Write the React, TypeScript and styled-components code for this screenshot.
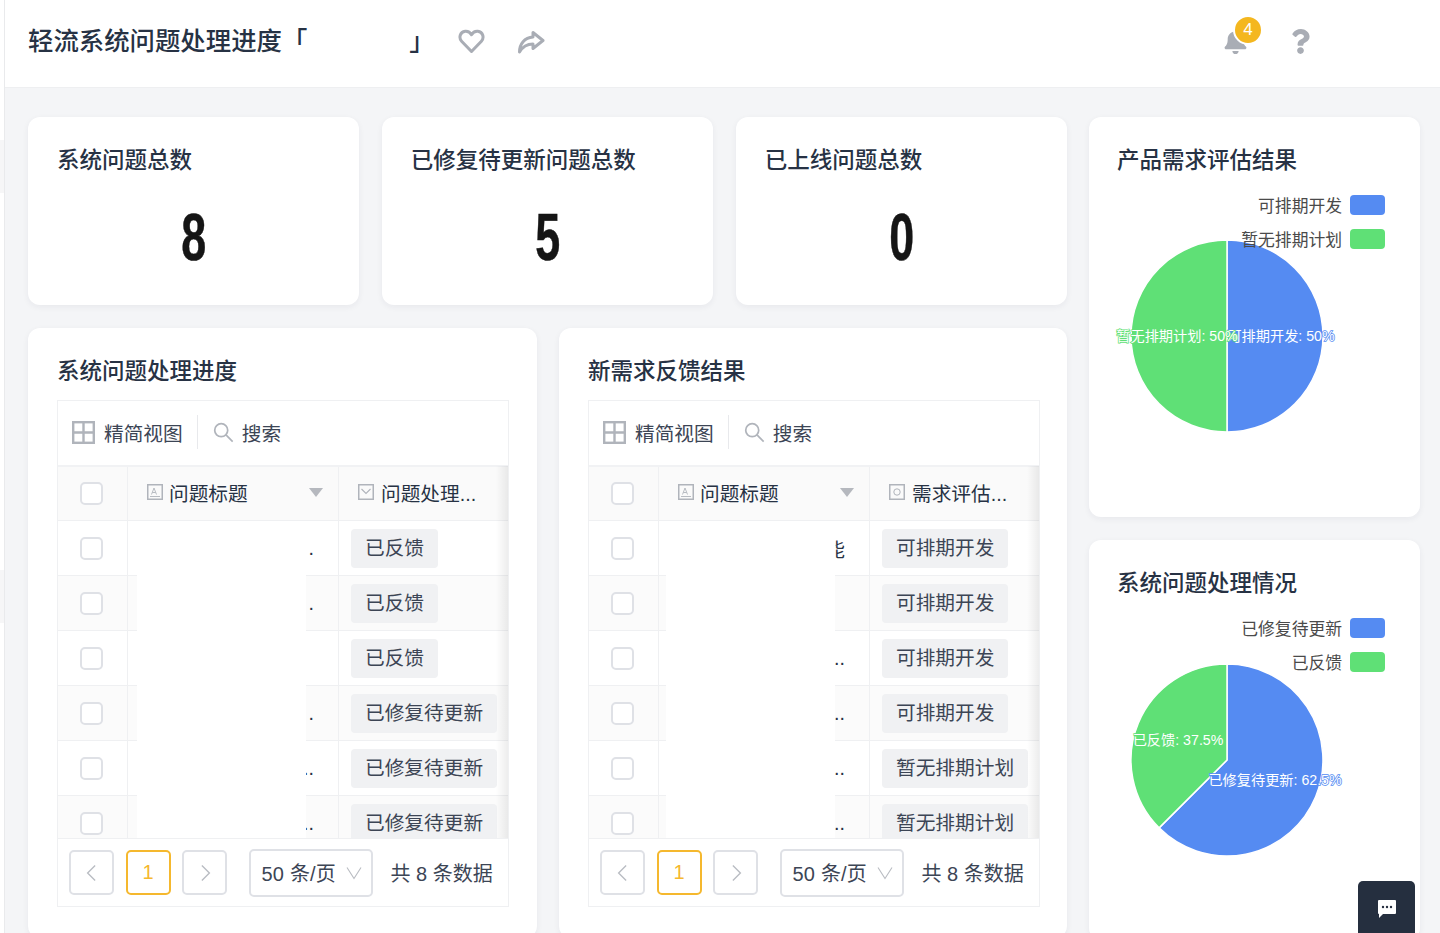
import React from "react";
import styled, { createGlobalStyle } from "styled-components";
import { FaBell, FaQuestion } from "react-icons/fa";

const GlobalStyle = createGlobalStyle`
  html, body { margin: 0; padding: 0; background: #f4f5f7; }
  * { box-sizing: border-box; }
  body { font-family: "Liberation Sans", "Noto Sans CJK SC", sans-serif; color: #1f2a3d; }
`;

const Page = styled.div`
  display: flex;
  width: 1440px;
  height: 933px;
  overflow: hidden;
  position: relative;
`;
const SideStrip = styled.aside`
  flex: 0 0 5px;
  display: flex;
  flex-direction: column;
  background: #fff;
  border-right: 1px solid #e9eaec;
`;
const StripPatch = styled.div<{ $top: number }>`
  margin-top: ${(p) => p.$top}px;
  height: 53px;
  background: #f6f6f7;
`;
const Main = styled.main`
  flex: 1;
  min-width: 0;
  display: flex;
  flex-direction: column;
`;
const Header = styled.header`
  flex: 0 0 88px;
  display: flex;
  align-items: center;
  padding: 0 127px 6px 23px;
  background: #fff;
  border-bottom: 1px solid #eeeff1;
`;
const PageTitle = styled.h1`
  margin: 0;
  display: flex;
  font-size: 25.4px;
  line-height: 34px;
  font-weight: 500;
  color: #273244;
  white-space: nowrap;
`;
const TitleGap = styled.span`
  display: inline-block;
  width: 102px;
`;
const HeaderAction = styled.span<{ $gap: number }>`
  display: inline-flex;
  margin-left: ${(p) => p.$gap}px;
  margin-top: 2px;
  color: #a9adb5;
`;
const HeaderRight = styled.div`
  margin-left: auto;
  margin-top: 2px;
  display: flex;
  align-items: center;
  gap: 40px;
  color: #a9adb5;
`;
const BellWrap = styled.div`
  position: relative;
  display: flex;
`;
const Badge = styled.span`
  position: absolute;
  left: 10px;
  top: -14px;
  width: 30px;
  height: 30px;
  border-radius: 50%;
  background: #f4b71f;
  border: 2px solid #fff;
  color: #fff;
  font-size: 17px;
  line-height: 26px;
  text-align: center;
`;
const Content = styled.div`
  flex: 1;
  display: flex;
  gap: 22px;
  padding: 29px 20px 0 23px;
`;
const LeftCol = styled.div`
  flex: 0 0 1039px;
  display: flex;
  flex-direction: column;
  gap: 23px;
`;
const RightCol = styled.div`
  flex: 0 0 331px;
  display: flex;
  flex-direction: column;
  gap: 23px;
`;
const StatRow = styled.div`
  display: grid;
  grid-template-columns: repeat(3, 1fr);
  gap: 22.5px;
`;
const Card = styled.section`
  background: #fff;
  border-radius: 12px;
  box-shadow: 0 2px 6px rgba(30, 40, 60, 0.06);
`;
const StatCard = styled(Card)`
  height: 188px;
  padding: 28px 29px 0;
`;
const CardTitle = styled.h2`
  margin: 0;
  font-size: 22.5px;
  line-height: 32px;
  font-weight: 500;
  color: #273244;
`;
const StatValue = styled.div`
  margin-top: 22px;
  text-align: center;
  font-size: 66px;
  line-height: 76px;
  font-weight: 700;
  color: #151515;
  -webkit-text-stroke: 0.5px #151515;
  transform: scaleX(0.68);
`;
const TableRow = styled.div`
  display: grid;
  grid-template-columns: 509px 508px;
  gap: 22px;
`;
const TableCard = styled(Card)`
  height: 610px;
  padding: 28px 29px 0;
`;
const TableBox = styled.div`
  margin-top: 12px;
  width: 452px;
  height: 507px;
  border: 1px solid #eff0f2;
  display: flex;
  flex-direction: column;
`;
const Toolbar = styled.div`
  flex: 0 0 64px;
  display: flex;
  align-items: center;
  padding: 0 0 2px 14px;
  font-size: 19.7px;
  color: #3c4555;
`;
const ToolIcon = styled.span<{ $gap: number }>`
  display: inline-flex;
  margin-right: ${(p) => p.$gap}px;
`;
const ToolDivider = styled.span`
  width: 1px;
  height: 34px;
  margin: 0 15px 0 14px;
  background: #e8e9ec;
`;
const TableBody = styled.div`
  position: relative;
  flex: 0 0 373px;
  overflow: hidden;
`;
const GridRow = styled.div<{ $head?: boolean; $tint?: boolean }>`
  display: grid;
  grid-template-columns: 70px 211px 1fr;
  height: ${(p) => (p.$head ? 56 : 55)}px;
  background: ${(p) => (p.$head ? "#fafafa" : p.$tint ? "#fbfbfb" : "#fff")};
  border-top: ${(p) => (p.$head ? "2px solid #f1f2f4" : "none")};
  border-bottom: 1px solid #eff0f2;
`;
const Cell = styled.div`
  display: flex;
  align-items: center;
  min-width: 0;
  border-right: 1px solid #eff0f2;
  &:last-child { border-right: none; }
`;
const CheckCell = styled(Cell)`
  justify-content: center;
  padding-right: 2px;
`;
const Check = styled.span`
  width: 23px;
  height: 23px;
  border: 2px solid #dfe1e6;
  border-radius: 5px;
  background: #fff;
`;
const HeadTitle = styled(Cell)`
  padding: 0 15px 3px 19px;
  font-size: 19.7px;
  color: #273244;
`;
const HeadStatus = styled(Cell)`
  padding: 0 0 3px 19px;
  font-size: 19.7px;
  color: #273244;
  white-space: nowrap;
`;
const FieldIcon = styled.span<{ $gap: number }>`
  display: inline-flex;
  margin-right: ${(p) => p.$gap}px;
`;
const Caret = styled.span`
  margin-left: auto;
  width: 0;
  height: 0;
  border-left: 7px solid transparent;
  border-right: 7px solid transparent;
  border-top: 9px solid #b5b8be;
`;
const TitleCell = styled(Cell)`
  justify-content: flex-end;
  padding-right: 24px;
  font-size: 19.7px;
  color: #273244;
  overflow: hidden;
`;
const TagCell = styled(Cell)`
  padding-left: 12px;
`;
const Tag = styled.span`
  height: 39px;
  padding: 0 14px;
  border-radius: 4px;
  background: #f0f1f3;
  color: #3c4555;
  font-size: 19.7px;
  line-height: 38px;
  white-space: nowrap;
`;
const Redaction = styled.div<{ $left: number; $width: number }>`
  position: absolute;
  left: ${(p) => p.$left}px;
  width: ${(p) => p.$width}px;
  top: 57px;
  bottom: 0;
  background: #fff;
`;
const EdgeShadow = styled.div`
  position: absolute;
  right: 0;
  top: 1px;
  bottom: 0;
  width: 12px;
  background: linear-gradient(to right, rgba(0, 0, 0, 0), rgba(0, 0, 0, 0.07));
`;
const Pager = styled.div`
  flex: 1;
  display: flex;
  align-items: center;
  padding-left: 11px;
  border-top: 1px solid #eff0f2;
  font-size: 20px;
  color: #3c4555;
`;
const PageBtn = styled.span<{ $active?: boolean }>`
  width: 45px;
  height: 45px;
  margin-right: 11.5px;
  display: flex;
  align-items: center;
  justify-content: center;
  border: 2px solid ${(p) => (p.$active ? "#f5b82e" : "#dfe1e6")};
  border-radius: 5px;
  color: ${(p) => (p.$active ? "#f5b82e" : "#b9bcc2")};
`;
const SizeSelect = styled.span`
  width: 124px;
  height: 48px;
  margin-left: 10px;
  padding: 0 9px 0 11px;
  display: flex;
  align-items: center;
  justify-content: space-between;
  border: 2px solid #dfe1e6;
  border-radius: 5px;
  letter-spacing: 0.2px;
  white-space: nowrap;
`;
const Total = styled.span`
  margin-left: 18px;
  white-space: nowrap;
`;
const ChartCard = styled(Card)<{ $h: number }>`
  position: relative;
  height: ${(p) => p.$h}px;
  padding-top: 28px;
`;
const ChartTitle = styled(CardTitle)`
  padding-left: 28px;
`;
const ChartArea = styled.div`
  position: relative;
  margin-top: 6px;
  height: 300px;
`;
const PieSvg = styled.svg`
  display: block;
  overflow: visible;
`;
const SliceLabel = styled.text<{ $edge: string }>`
  font-family: "Liberation Sans", "Noto Sans CJK SC", sans-serif;
  font-size: 14.2px;
  fill: #fff;
  stroke: ${(p) => p.$edge};
  stroke-width: 1.5px;
  paint-order: stroke;
  text-anchor: middle;
`;
const Legend = styled.div`
  position: absolute;
  right: 35px;
  top: 12px;
  display: flex;
  flex-direction: column;
  gap: 14px;
`;
const LegendRow = styled.div`
  display: flex;
  justify-content: flex-end;
  align-items: center;
  height: 20px;
  gap: 8px;
  font-size: 16.8px;
  color: #4a4a4a;
  white-space: nowrap;
`;
const Swatch = styled.span<{ $color: string }>`
  width: 35px;
  height: 20px;
  border-radius: 4px;
  background: ${(p) => p.$color};
`;
const ChatButton = styled.button`
  position: absolute;
  left: 1358px;
  top: 881px;
  width: 57px;
  height: 56px;
  padding: 0;
  border: none;
  border-radius: 5px 5px 0 0;
  background: #252f3f;
  display: flex;
  align-items: center;
  justify-content: center;
`;

const BLUE = "#558bf2";
const GREEN = "#5fe076";

const GridIcon = () => (
  <svg width="23" height="23" viewBox="0 0 23 23" fill="none" stroke="#b0b4bb" strokeWidth="2.4">
    <rect x="1.2" y="1.2" width="20.6" height="20.6" />
    <path d="M11.5 1v21M1 11.5h21" />
  </svg>
);
const SearchIcon = () => (
  <svg width="21" height="21" viewBox="0 0 22 22" fill="none" stroke="#b0b4bb" strokeWidth="1.8">
    <circle cx="8.6" cy="8.6" r="6.8" />
    <path d="M13.6 13.6 20.6 20.6" />
  </svg>
);
const TextFieldIcon = () => (
  <svg width="16" height="16" viewBox="0 0 16 16" fill="none" stroke="#b0b4bb">
    <rect x="0.75" y="0.75" width="14.5" height="14.5" strokeWidth="1.5" />
    <path d="M4.5 10.5 7 4l2.5 6.5M5.4 8.5h3.2M3 12.5h10" strokeWidth="0.9" />
  </svg>
);
const SelectFieldIcon = () => (
  <svg width="16" height="16" viewBox="0 0 16 16" fill="none" stroke="#b0b4bb">
    <rect x="0.75" y="0.75" width="14.5" height="14.5" strokeWidth="1.5" />
    <path d="M3.5 5 8 9.5 12.5 5" strokeWidth="1.1" />
  </svg>
);
const RadioFieldIcon = () => (
  <svg width="16" height="16" viewBox="0 0 16 16" fill="none" stroke="#b0b4bb">
    <rect x="0.75" y="0.75" width="14.5" height="14.5" strokeWidth="1.5" />
    <circle cx="8" cy="8" r="3.2" strokeWidth="1" />
  </svg>
);
const Chevron = ({ dir, size = 20 }: { dir: "left" | "right" | "down"; size?: number }) => (
  <svg width={size} height={size} viewBox="0 0 16 16" fill="none" stroke="#b9bcc2" strokeWidth="1.1">
    <path d={dir === "left" ? "M10.5 2 4.5 8l6 6" : dir === "right" ? "M5.5 2l6 6-6 6" : "M1 2.500 8 13.500l7-11"} />
  </svg>
);

type RowData = { text: string; tag: string };

const DataTable = ({
  statusName,
  statusIcon,
  rows,
  maskLeft,
  maskWidth,
}: {
  statusName: string;
  statusIcon: React.ReactNode;
  rows: RowData[];
  maskLeft: number;
  maskWidth: number;
}) => (
  <TableBox>
    <Toolbar>
      <ToolIcon $gap={9}><GridIcon /></ToolIcon>
      精简视图
      <ToolDivider />
      <ToolIcon $gap={8}><SearchIcon /></ToolIcon>
      搜索
    </Toolbar>
    <TableBody>
      <GridRow $head>
        <CheckCell><Check /></CheckCell>
        <HeadTitle>
          <FieldIcon $gap={6}><TextFieldIcon /></FieldIcon>
          问题标题
          <Caret />
        </HeadTitle>
        <HeadStatus>
          <FieldIcon $gap={7}>{statusIcon}</FieldIcon>
          {statusName}
        </HeadStatus>
      </GridRow>
      {rows.map((r, i) => (
        <GridRow key={i} $tint={i % 2 === 1}>
          <CheckCell><Check /></CheckCell>
          <TitleCell>{r.text}</TitleCell>
          <TagCell><Tag>{r.tag}</Tag></TagCell>
        </GridRow>
      ))}
      <Redaction $left={maskLeft} $width={maskWidth} />
      <EdgeShadow />
    </TableBody>
    <Pager>
      <PageBtn><Chevron dir="left" /></PageBtn>
      <PageBtn $active>1</PageBtn>
      <PageBtn><Chevron dir="right" /></PageBtn>
      <SizeSelect>
        50 条/页
        <Chevron dir="down" size={16} />
      </SizeSelect>
      <Total>共 8 条数据</Total>
    </Pager>
  </TableBox>
);

const ChartHalf = () => (
  <PieSvg width="331" height="300" viewBox="0 0 331 300">
    <path d="M138 153 V57 A96 96 0 0 1 138 249 Z" fill={BLUE} stroke="#fff" strokeWidth="1.5" />
    <path d="M138 153 V249 A96 96 0 0 1 138 57 Z" fill={GREEN} stroke="#fff" strokeWidth="1.5" />
    <SliceLabel $edge={BLUE} x="192" y="158">可排期开发: 50%</SliceLabel>
    <SliceLabel $edge={GREEN} x="88" y="158">暂无排期计划: 50%</SliceLabel>
  </PieSvg>
);
const ChartSplit = () => (
  <PieSvg width="331" height="300" viewBox="0 0 331 300">
    <path d="M138 154 V58 A96 96 0 1 1 70.1 221.9 Z" fill={BLUE} stroke="#fff" strokeWidth="1.5" />
    <path d="M138 154 L70.1 221.9 A96 96 0 0 1 138 58 Z" fill={GREEN} stroke="#fff" strokeWidth="1.5" />
    <SliceLabel $edge={GREEN} x="89" y="139">已反馈: 37.5%</SliceLabel>
    <SliceLabel $edge={BLUE} x="186" y="179">已修复待更新: 62.5%</SliceLabel>
  </PieSvg>
);

const issueRows: RowData[] = [
  { text: ".", tag: "已反馈" },
  { text: ".", tag: "已反馈" },
  { text: "", tag: "已反馈" },
  { text: ".", tag: "已修复待更新" },
  { text: "..", tag: "已修复待更新" },
  { text: "..", tag: "已修复待更新" },
];
const demandRows: RowData[] = [
  { text: "能", tag: "可排期开发" },
  { text: "", tag: "可排期开发" },
  { text: "..", tag: "可排期开发" },
  { text: "..", tag: "可排期开发" },
  { text: "..", tag: "暂无排期计划" },
  { text: "..", tag: "暂无排期计划" },
];

export default function App() {
  return (
    <Page>
      <GlobalStyle />
      <SideStrip>
        <StripPatch $top={140} />
        <StripPatch $top={377} />
      </SideStrip>
      <Main>
        <Header>
          <PageTitle>
            轻流系统问题处理进度「<TitleGap />」
          </PageTitle>
          <HeaderAction $gap={23}>
            <svg width="27" height="25" viewBox="0 0 27 25" fill="none" stroke="currentColor" strokeWidth="3" strokeLinejoin="round">
              <path d="M13.5 22.5 3.6 12.2C.6 9 1.8 2.8 7.2 2.2c2.8-.3 5 1.2 6.3 3.6 1.3-2.4 3.5-3.900 6.3-3.600 5.400.6 6.600 6.800 3.600 10z" />
            </svg>
          </HeaderAction>
          <HeaderAction $gap={32}>
            <svg width="28" height="24" viewBox="0 0 28 24" fill="none" stroke="currentColor" strokeWidth="3" strokeLinejoin="round">
              <path d="M16 2.5 26 10.5 16 18.5V14C10 14 6 16 2.5 22 2.5 14 7.500 7.500 16 7z" />
            </svg>
          </HeaderAction>
          <HeaderRight>
            <BellWrap>
              <FaBell size={25} />
              <Badge>4</Badge>
            </BellWrap>
            <FaQuestion size={25} />
          </HeaderRight>
        </Header>
        <Content>
          <LeftCol>
            <StatRow>
              <StatCard>
                <CardTitle>系统问题总数</CardTitle>
                <StatValue>8</StatValue>
              </StatCard>
              <StatCard>
                <CardTitle>已修复待更新问题总数</CardTitle>
                <StatValue>5</StatValue>
              </StatCard>
              <StatCard>
                <CardTitle>已上线问题总数</CardTitle>
                <StatValue>0</StatValue>
              </StatCard>
            </StatRow>
            <TableRow>
              <TableCard>
                <CardTitle>系统问题处理进度</CardTitle>
                <DataTable statusName="问题处理..." statusIcon={<SelectFieldIcon />} rows={issueRows} maskLeft={79} maskWidth={169} />
              </TableCard>
              <TableCard>
                <CardTitle>新需求反馈结果</CardTitle>
                <DataTable statusName="需求评估..." statusIcon={<RadioFieldIcon />} rows={demandRows} maskLeft={77} maskWidth={169} />
              </TableCard>
            </TableRow>
          </LeftCol>
          <RightCol>
            <ChartCard $h={400}>
              <ChartTitle>产品需求评估结果</ChartTitle>
              <ChartArea>
                <ChartHalf />
                <Legend>
                  <LegendRow>可排期开发<Swatch $color={BLUE} /></LegendRow>
                  <LegendRow>暂无排期计划<Swatch $color={GREEN} /></LegendRow>
                </Legend>
              </ChartArea>
            </ChartCard>
            <ChartCard $h={400}>
              <ChartTitle>系统问题处理情况</ChartTitle>
              <ChartArea>
                <ChartSplit />
                <Legend>
                  <LegendRow>已修复待更新<Swatch $color={BLUE} /></LegendRow>
                  <LegendRow>已反馈<Swatch $color={GREEN} /></LegendRow>
                </Legend>
              </ChartArea>
            </ChartCard>
          </RightCol>
        </Content>
      </Main>
      <ChatButton aria-label="chat">
        <svg width="20" height="20" viewBox="0 0 20 20">
          <path d="M2 1h16a1 1 0 0 1 1 1v12a1 1 0 0 1-1 1H6l-4 4V15a1 1 0 0 1-1-1V2a1 1 0 0 1 1-1z" fill="#fff" />
          <circle cx="6" cy="8" r="1.2" fill="#252f3f" />
          <circle cx="10" cy="8" r="1.2" fill="#252f3f" />
          <circle cx="14" cy="8" r="1.2" fill="#252f3f" />
        </svg>
      </ChatButton>
    </Page>
  );
}
